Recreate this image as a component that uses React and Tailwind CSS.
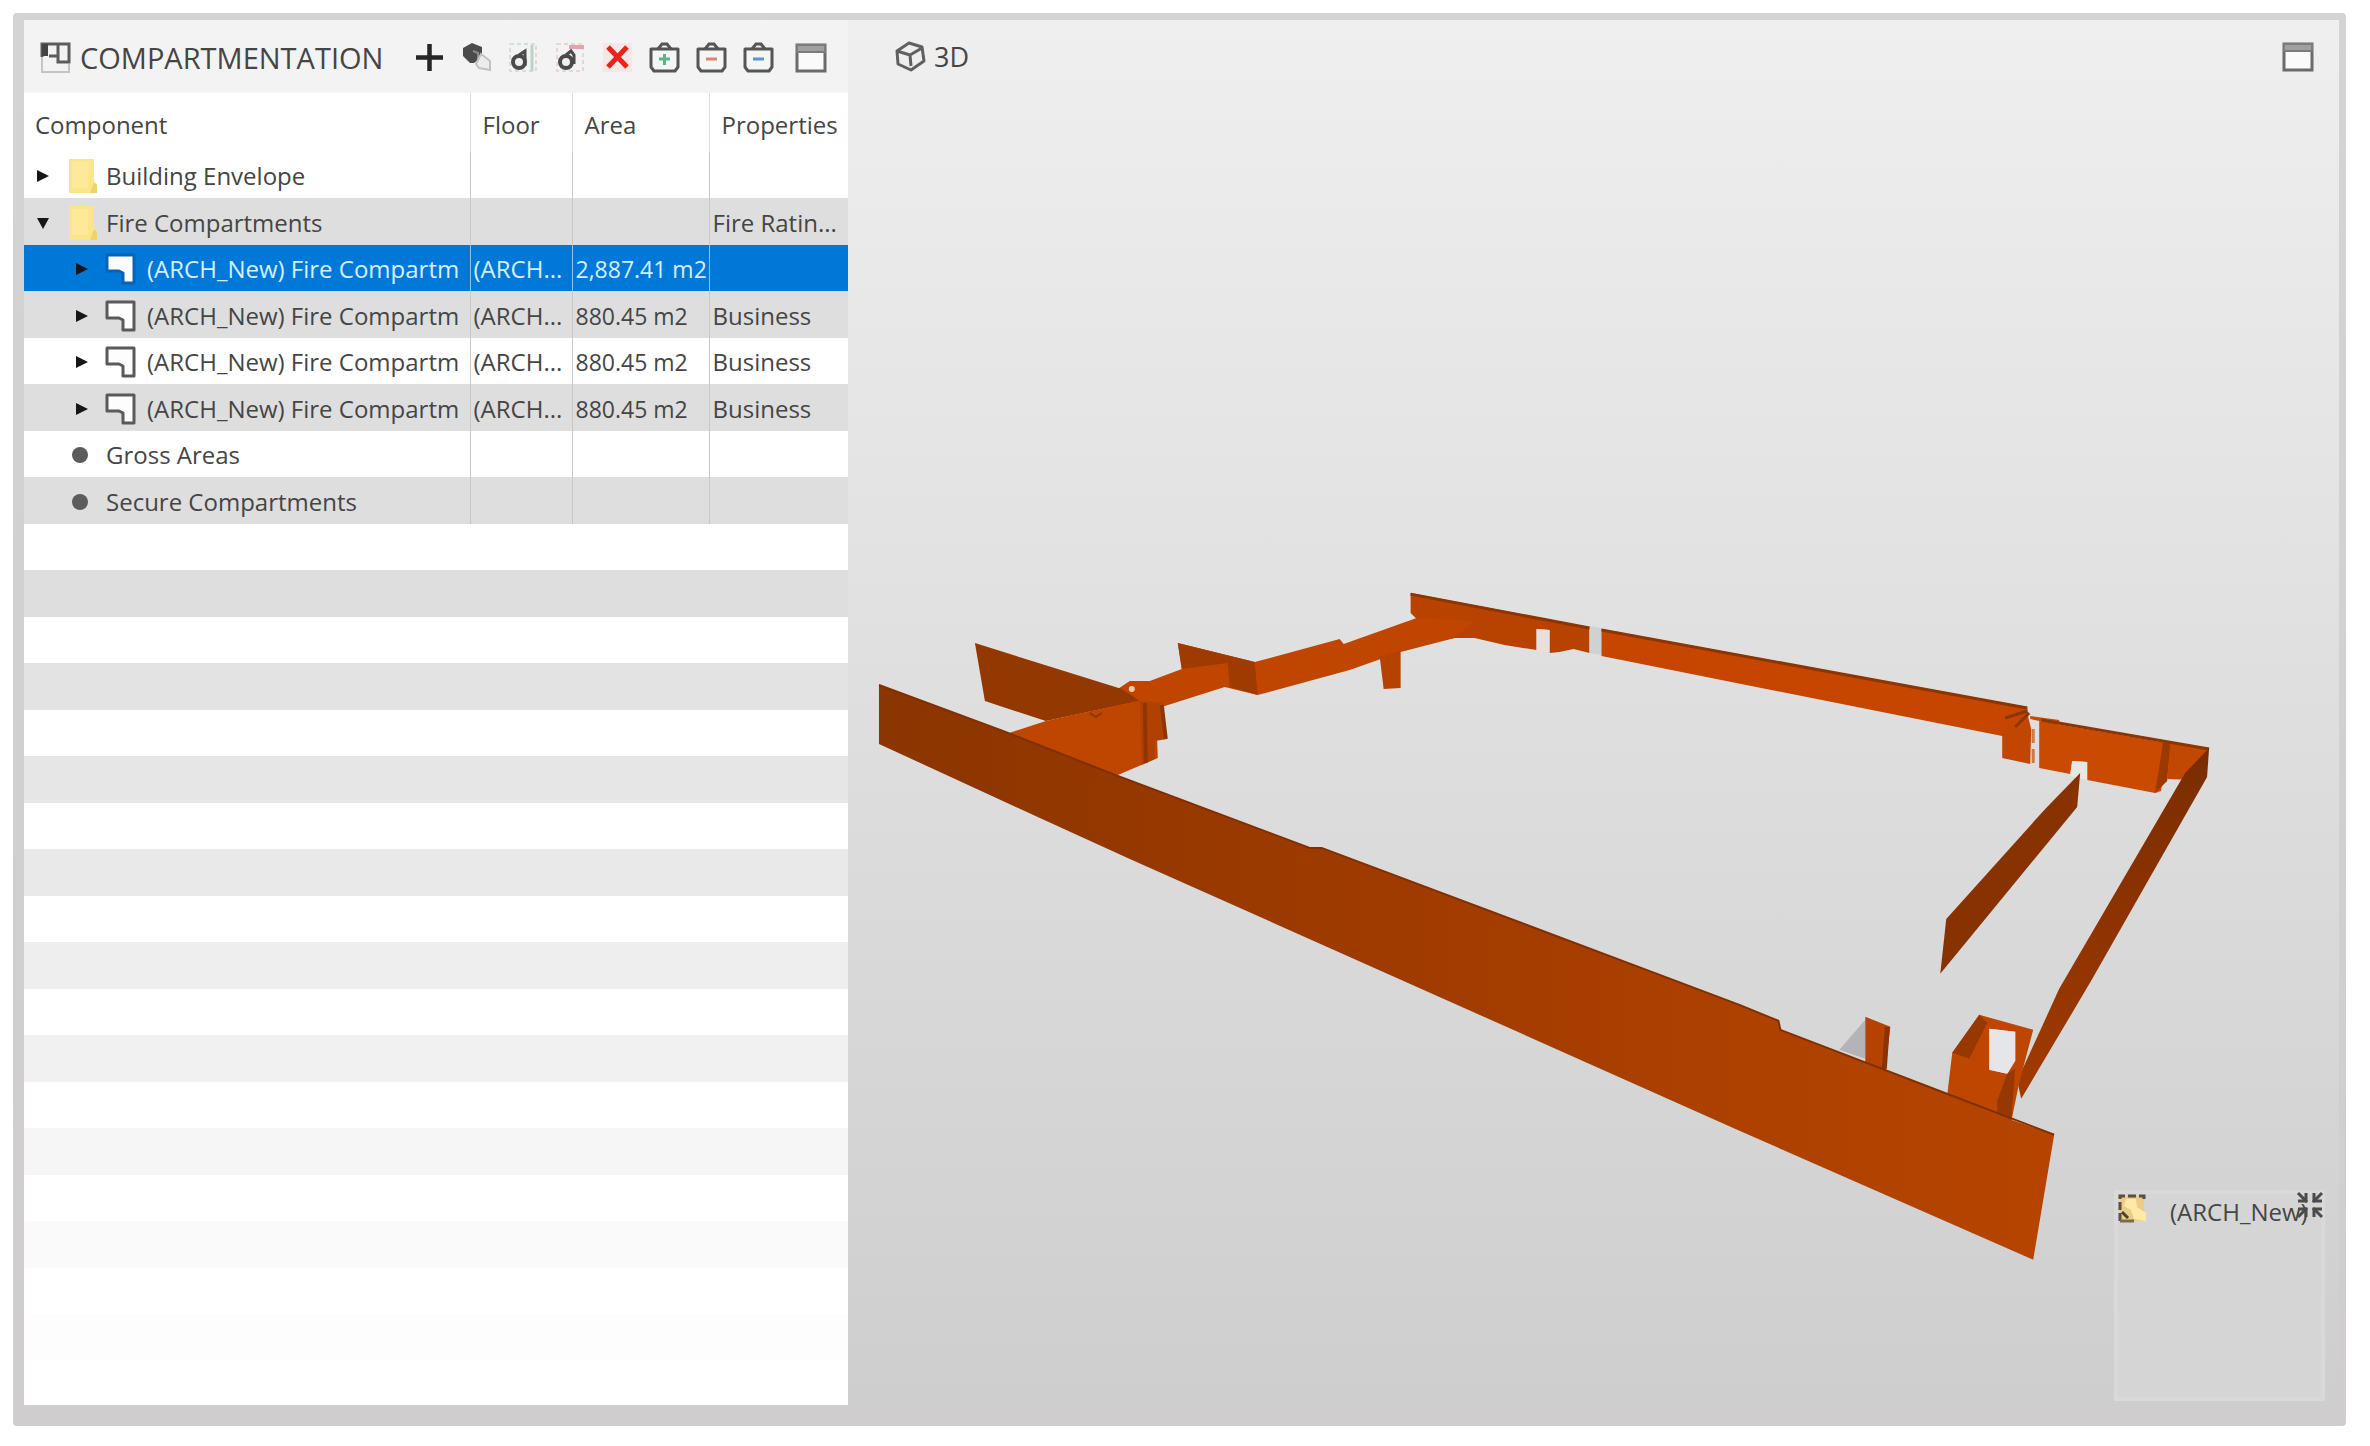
import { useState } from 'react';
import clsx from 'clsx';

const rows = [
  { kind: 'folder', open: false, name: 'Building Envelope', floor: '', area: '', props: '' },
  { kind: 'folder', open: true, name: 'Fire Compartments', floor: '', area: '', props: 'Fire Ratin...' },
  { kind: 'area', name: '(ARCH_New) Fire Compartm', floor: '(ARCH...', area: '2,887.41 m2', props: '' },
  { kind: 'area', name: '(ARCH_New) Fire Compartm', floor: '(ARCH...', area: '880.45 m2', props: 'Business' },
  { kind: 'area', name: '(ARCH_New) Fire Compartm', floor: '(ARCH...', area: '880.45 m2', props: 'Business' },
  { kind: 'area', name: '(ARCH_New) Fire Compartm', floor: '(ARCH...', area: '880.45 m2', props: 'Business' },
  { kind: 'leaf', name: 'Gross Areas', floor: '', area: '', props: '' },
  { kind: 'leaf', name: 'Secure Compartments', floor: '', area: '', props: '' },
];

// Empty rows under the tree, the stripes fade out towards the bottom
const emptyRows = [
  'bg-white', 'bg-[#dedede]', 'bg-white', 'bg-[#e3e3e3]', 'bg-white', 'bg-[#e6e6e6]',
  'bg-white', 'bg-[#e9e9e9]', 'bg-white', 'bg-[#eeeeee]', 'bg-white', 'bg-[#f1f1f1]',
  'bg-white', 'bg-[#f6f6f6]', 'bg-white', 'bg-[#fafafa]', 'bg-white', 'bg-[#fdfdfd]',
];

export default function App() {
  const [selected, setSelected] = useState(2);

  return (
    <main className="h-screen bg-white pt-[13px] pr-6 pb-5 pl-[13px] font-['Open_Sans','Noto_Sans',sans-serif] text-[#454545]">
      <div className="flex h-full rounded-sm bg-gradient-to-b from-[#d4d4d4] to-[#cfcdce] pt-[7px] pr-[7px] pb-[21px] pl-[11px]">
        <section className="flex w-[824px] shrink-0 flex-col bg-white">
          <header className="flex h-[73px] shrink-0 items-center bg-[#f3f3f3] pt-[2px] pl-4">
            <CompartmentIcon />
            <h1 className="ml-2 w-[334px] text-[29px] leading-8 whitespace-nowrap">COMPARTMENTATION</h1>
            <div className="flex items-center gap-4">
              {tools.map(({ label, Icon }) => (
                <button key={label} type="button" aria-label={label} className="h-[31px] w-[31px]">
                  <Icon />
                </button>
              ))}
              <button type="button" aria-label="Maximize panel" className="ml-1 h-[34px] w-[34px]">
                <WindowIcon />
              </button>
            </div>
          </header>

          <div className="min-h-0 flex-1 overflow-hidden">
            <table className="w-full table-fixed border-collapse text-left text-[24px] leading-8 whitespace-nowrap">
              <colgroup>
                <col />
                <col className="w-[102px]" />
                <col className="w-[137px]" />
                <col className="w-[139px]" />
              </colgroup>
              <thead>
                <tr className="h-[59px]">
                  <th className="pt-1 pl-[11px] font-normal">Component</th>
                  <th className="border-l border-[#dddddd] pt-1 pl-3 font-normal">Floor</th>
                  <th className="border-l border-[#dddddd] pt-1 pl-3 font-normal">Area</th>
                  <th className="border-l border-[#dddddd] pt-1 pl-3 font-normal">Properties</th>
                </tr>
              </thead>
              <tbody>
                {rows.map((row, i) => {
                  const active = i === selected;
                  const cell = clsx(
                    'border-l p-0 pt-[2px] pl-[3px]',
                    active ? 'border-[#8fc4ee]' : 'border-[#c8c8c8]'
                  );
                  return (
                    <tr
                      key={i}
                      onClick={() => setSelected(i)}
                      className={clsx(
                        i % 2 ? 'h-[47px]' : 'h-[46px]',
                        active ? 'bg-[#0078d7] text-[#d5efff]' : i % 2 ? 'bg-[#dedede]' : 'bg-white'
                      )}
                    >
                      <td className="p-0 pt-[2px]">
                        <TreeCell row={row} active={active} />
                      </td>
                      <td className={cell}>{row.floor}</td>
                      <td className={clsx(cell, 'text-[23px]')}>{row.area}</td>
                      <td className={cell}>{row.props}</td>
                    </tr>
                  );
                })}
                {emptyRows.map((bg, i) => (
                  <tr key={i} aria-hidden="true" className={clsx(bg, i % 2 ? 'h-[47px]' : 'h-[46px]')}>
                    <td colSpan={4} className="p-0"></td>
                  </tr>
                ))}
              </tbody>
            </table>
          </div>
        </section>

        <section className="relative flex min-w-0 flex-1 flex-col bg-gradient-to-b from-[#efefef] to-[#cecece]">
          <header className="flex h-[73px] shrink-0 items-center pr-6 pl-[46px]">
            <CubeIcon />
            <h2 className="ml-2 flex-1 text-[27px] leading-8">3D</h2>
            <button type="button" aria-label="Maximize view" className="h-[34px] w-[34px]">
              <WindowIcon />
            </button>
          </header>
          <div className="min-h-0 flex-1">
            <Scene />
          </div>

          <aside className="absolute right-[14px] bottom-1 h-[211px] w-[211px] border-4 border-[#d9d9d9] bg-[#d5d5d5]">
            <div className="flex items-start">
              <NoteIcon />
              <span className="ml-[22px] text-[24px] leading-9">(ARCH_New)</span>
            </div>
            <button type="button" aria-label="Collapse" className="absolute top-[-4px] right-[-4px] h-[30px] w-[30px]">
              <CollapseIcon />
            </button>
          </aside>
        </section>
      </div>
    </main>
  );
}

function TreeCell({ row, active }) {
  if (row.kind === 'folder') {
    return (
      <div className="flex items-center pl-3">
        <Arrow open={row.open} />
        <svg viewBox="0 0 30 36" className="ml-[18px] h-9 w-[30px] shrink-0">
          <path d="M1 1H26V24L29 27V35H1Z" fill="#fbe58a" />
          <path d="M26 24L29 27V35H22Z" fill="#eed26a" />
          <path d="M4 4H20V30H4Z" fill="#fee99a" />
        </svg>
        <span className="ml-2">{row.name}</span>
      </div>
    );
  }
  if (row.kind === 'area') {
    return (
      <div className="flex items-center pl-[51px]">
        <Arrow open={false} />
        <svg viewBox="0 0 32 32" className="ml-4 h-8 w-8 shrink-0">
          <path
            d="M2 2H29V30H18V20L14 18H2Z"
            fill="#fdfdfd"
            stroke={active ? '#0a63b5' : '#5a5a5a'}
            strokeWidth="3"
            strokeLinejoin="round"
          />
        </svg>
        <span className="ml-[10px]">{row.name}</span>
      </div>
    );
  }
  return (
    <div className="flex items-center pl-12">
      <span className="h-4 w-4 shrink-0 rounded-full bg-[#5c5c5c]"></span>
      <span className="ml-[18px]">{row.name}</span>
    </div>
  );
}

function Arrow({ open }) {
  return (
    <svg viewBox="0 0 14 14" className="h-[14px] w-[14px] shrink-0" fill="#161616">
      {open ? <path d="M1 2H13L7 13Z" /> : <path d="M1 1L13 7L1 13Z" />}
    </svg>
  );
}

function CompartmentIcon() {
  return (
    <svg viewBox="0 0 32 32" className="h-8 w-8 shrink-0" fill="none">
      <path d="M2 14V30H29V22" stroke="#c4c4c4" strokeWidth="2" />
      <path d="M2 15V2H29V20H18V2M18 14H9" stroke="#5c5c5c" strokeWidth="3" />
      <path d="M2 2H8V14H2Z" fill="#444" />
    </svg>
  );
}

function PlusIcon() {
  return (
    <svg viewBox="0 0 31 31">
      <path d="M15.500 2V29M2 15.500H29" stroke="#262626" strokeWidth="4.500" />
    </svg>
  );
}

function MergeIcon() {
  return (
    <svg viewBox="0 0 31 31">
      <path d="M2 6L11 1L21 5V15L13 21H9L2 14Z" fill="#4b4b4b" />
      <path d="M12 9L17 11V17" stroke="#8a8a8a" strokeWidth="2" fill="none" />
      <path d="M20 12L29 19V28L18 26L15 22Z" fill="#ececec" stroke="#c2c2c2" strokeWidth="2" />
    </svg>
  );
}

function AddSpaceIcon() {
  return (
    <svg viewBox="0 0 31 31" fill="none">
      <path d="M2 2H28V29H2Z" stroke="#d5dfd9" strokeWidth="2" strokeDasharray="4 3" />
      <path d="M24 3V29" stroke="#bcd3c5" strokeWidth="3" />
      <circle cx="11" cy="20" r="6" stroke="#4a4a4a" strokeWidth="4" fill="#efefef" />
      <path d="M11 13L17 9V24" stroke="#4a4a4a" strokeWidth="3" />
    </svg>
  );
}

function RemoveSpaceIcon() {
  return (
    <svg viewBox="0 0 31 31" fill="none">
      <path d="M2 2H28V29H2Z" stroke="#e9d5d8" strokeWidth="2" strokeDasharray="4 3" />
      <path d="M14 5H29" stroke="#e2a4ac" strokeWidth="4" />
      <circle cx="11" cy="20" r="6" stroke="#4a4a4a" strokeWidth="4" fill="#efefef" />
      <path d="M11 13L16 9L19 13V22" stroke="#4a4a4a" strokeWidth="3" />
    </svg>
  );
}

function DeleteIcon() {
  return (
    <svg viewBox="0 0 31 31">
      <path d="M1 1H30V30H1Z" fill="#f6e6e6" />
      <path d="M6 5L25 25M25 5L6 25" stroke="#e8231f" strokeWidth="5" />
    </svg>
  );
}

// Briefcase shaped box, the sign in the middle tells what it does
function CaseIcon({ color, plus }) {
  return (
    <svg viewBox="0 0 31 31" fill="none">
      <path d="M2 7H29V25L26 29H5L2 25Z" fill="#f4f6f5" stroke="#555" strokeWidth="3" strokeLinejoin="round" />
      <path d="M9 7L13 2H18L22 7" stroke="#555" strokeWidth="3" />
      <path d="M10 17H21" stroke={color} strokeWidth="3" />
      {plus && <path d="M15.500 12V23" stroke={color} strokeWidth="3" />}
    </svg>
  );
}

const CaseAddIcon = () => <CaseIcon color="#5db38a" plus />;
const CaseRemoveIcon = () => <CaseIcon color="#dd8472" />;
const CaseEditIcon = () => <CaseIcon color="#5797cc" />;

const tools = [
  { label: 'Add', Icon: PlusIcon },
  { label: 'Merge', Icon: MergeIcon },
  { label: 'Add space', Icon: AddSpaceIcon },
  { label: 'Remove space', Icon: RemoveSpaceIcon },
  { label: 'Delete', Icon: DeleteIcon },
  { label: 'Add set', Icon: CaseAddIcon },
  { label: 'Remove set', Icon: CaseRemoveIcon },
  { label: 'Edit set', Icon: CaseEditIcon },
];

function WindowIcon() {
  return (
    <svg viewBox="0 0 34 34">
      <path d="M3 4H31V30H3Z" fill="#fafafa" stroke="#6b6b6b" strokeWidth="3" />
      <path d="M3 4H31V11H3Z" fill="#a0a0a0" stroke="#7c7c7c" strokeWidth="2" />
    </svg>
  );
}

function CubeIcon() {
  return (
    <svg viewBox="0 0 32 32" className="h-8 w-8 shrink-0" fill="none" stroke="#606060" strokeWidth="3" strokeLinejoin="round">
      <path d="M3 10L15 2L28 6L30 20L17 29L4 23Z" />
      <path d="M3 10L16 14L28 7M16 14L17 25" />
    </svg>
  );
}

function NoteIcon() {
  return (
    <svg viewBox="0 0 30 30" className="h-[30px] w-[30px] shrink-0">
      <path d="M2 2H26V27H2Z" fill="#e9cd88" />
      <path d="M2 27V2H26V8" stroke="#5b503c" strokeWidth="3" strokeDasharray="8 3" fill="none" />
      <path d="M2 27H16" stroke="#7d6c48" strokeWidth="3" />
      <path d="M4 18L10 24" stroke="#4b4133" strokeWidth="3" />
      <path d="M8 5L18 5L19 13L28 19V27L16 25L13 16L6 12Z" fill="#ffe9a6" />
    </svg>
  );
}

function CollapseIcon() {
  return (
    <svg viewBox="0 0 30 30" fill="none" stroke="#4b4b4b" strokeWidth="3">
      <path d="M3 3L12 12M27 3L18 12M3 27L12 18M27 27L18 18" />
      <path d="M11 3V11H3M19 3V11H27M11 27V19H3M19 27V19H27" />
    </svg>
  );
}

function Scene() {
  return (
    <svg viewBox="848 92 1492 1312" className="h-full w-full" role="img" aria-label="Fire compartment walls">
      <defs>
        <linearGradient id="front" gradientUnits="userSpaceOnUse" x1="879" y1="0" x2="2054" y2="0">
          <stop offset="0" stopColor="#8b3500" />
          <stop offset="0.450" stopColor="#a03b00" />
          <stop offset="0.750" stopColor="#ae4100" />
          <stop offset="1" stopColor="#b64400" />
        </linearGradient>
        <linearGradient id="side" gradientUnits="userSpaceOnUse" x1="0" y1="750" x2="0" y2="1098">
          <stop offset="0" stopColor="#7a2d00" />
          <stop offset="1" stopColor="#a13a00" />
        </linearGradient>
      </defs>

      {/* back wall */}
      <polygon fill="#b84200" points="1411,592 1590,626 1590,652 1574,648 1560,651 1550,652 1550,629 1537,628 1537,649 1505,644 1475,637 1455,637 1415,645 1417,618 1411,612" />
      <polygon fill="#eadfda" points="1537,628 1550,629 1550,652 1537,649" />
      <polygon fill="#cfd2d2" points="1590,625 1602,627 1602,654 1590,652" />
      <polygon fill="#c64600" points="1602,628 2028,706 2028,740 2003,735 1602,655" />
      <path d="M1411 593L1590 627M1602 629L2028 707" stroke="#8d3500" strokeWidth="3" fill="none" />

      {/* left run of walls */}
      <polygon fill="#c04600" points="1178,642 1255,661 1340,638 1344,643 1417,617 1475,620 1455,637 1401,651 1350,669 1258,694 1225,686 1165,705 1118,702 1118,688 1130,680 1150,680 1182,668" />
      <polygon fill="#9f3b00" points="1178,642 1255,661 1258,694 1230,686 1228,662 1182,668" />
      <polygon fill="#b54200" points="1380,655 1401,650 1401,687 1384,688" />
      <polygon fill="#923800" points="975,642 1122,688 1140,700 1046,720 985,700" />
      <polygon fill="#be4600" points="1000,735 1046,720 1142,699 1156,700 1158,757 1118,774 1080,762" />
      <polygon fill="#b14100" points="1140,700 1163,702 1167,738 1155,740 1155,758 1142,764" />
      <path d="M1145 702L1146 762M1162 704L1166 738" stroke="#8f3600" strokeWidth="4" />
      <circle cx="1132" cy="688" r="3" fill="#f3c8a8" />
      <path d="M1090 712L1096 716L1102 712" stroke="#8f3600" strokeWidth="2" fill="none" />

      {/* right corner block */}
      <polygon fill="#c24600" points="2003,733 2028,706 2029,716 2032,728 2031,763 2003,757" />
      <path d="M2006 717L2028 710M2016 726L2030 712" stroke="#8d3500" strokeWidth="3" />
      <polygon fill="#c94a00" points="2040,720 2168,742 2162,790 2156,792 2088,779 2088,761 2073,760 2071,773 2040,767" />
      <polygon fill="#e6e8e4" points="2073,760 2088,761 2088,779 2071,775" />
      <polygon fill="#c94a00" points="2031,715 2060,719 2060,724 2031,718" />
      <path d="M2034 728V766" stroke="#c97a4a" strokeWidth="3" strokeDasharray="14 6" />
      <polygon fill="#9c3900" points="2164,741 2172,742 2168,780 2156,792" />
      <polygon fill="#c24700" points="2171,742 2210,748 2196,779 2168,778" />
      <path d="M2042 719L2210 748" stroke="#8d3500" strokeWidth="3" />
      <polygon fill="url(#side)" points="2210,747 2208,776 2092,980 2022,1098 2018,1080 2060,988 2186,772" />
      <polygon fill="#873200" points="2081,772 2078,806 1941,973 1947,918 2046,808" />

      {/* shafts next to the front wall */}
      <polygon fill="#b4b4b8" points="1840,1049 1866,1019 1866,1058" />
      <polygon fill="#b64200" points="1866,1016 1891,1026 1886,1070 1866,1062" />
      <path d="M1888 1026L1885 1068" stroke="#8a3300" strokeWidth="5" />
      <path
        fill="#bf4600"
        fillRule="evenodd"
        d="M1948 1094L1953 1052L1980 1014L2034 1029L2020 1082L2012 1121ZM1990 1028V1069L2008 1073L2016 1060V1031Z"
      />
      <path fill="#e6e6ea" d="M1990 1028V1069L2008 1073L2016 1060V1031Z" />
      <path fill="#963800" d="M1953 1052L1980 1014L1988 1022L1970 1058Z" />
      <path fill="#963800" d="M1998 1100L2008 1073L2016 1068L2012 1120L1998 1114Z" />

      {/* front wall */}
      <polygon
        fill="url(#front)"
        points="879,684 1003,730 1118,775 1310,847 1322,847 1740,1004 1779,1020 1781,1029 1945,1092 2012,1119 2055,1134 2034,1259 1740,1130 1130,858 1040,817 879,743"
      />
      <path
        d="M879 684L1003 730L1118 775L1310 847L1322 847L1740 1004L1779 1020L1781 1029L1945 1092L2055 1134"
        stroke="#803000"
        strokeWidth="2"
        fill="none"
      />
    </svg>
  );
}
